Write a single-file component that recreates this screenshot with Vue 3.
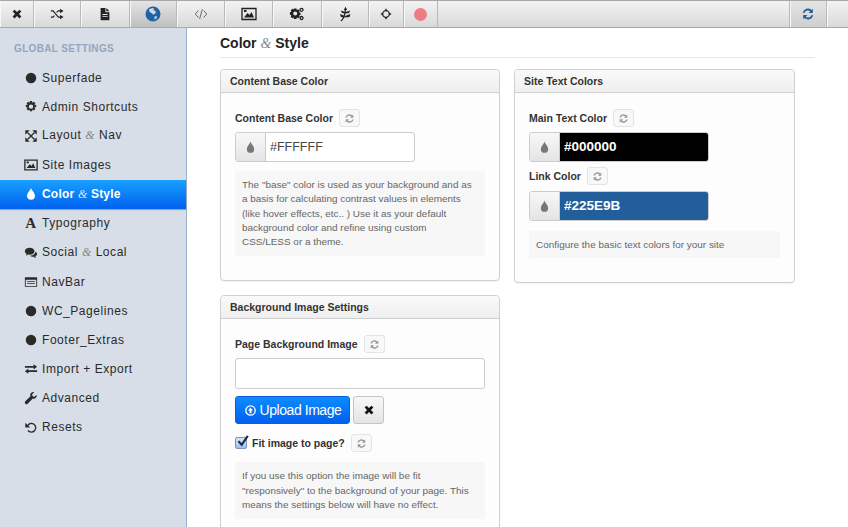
<script setup>
const icons = {
  times: { f: 'M3 5.2 5.2 3 8 5.8 10.800 3 13 5.2 10.200 8 13 10.800 10.800 13 8 10.200 5.200 13 3 10.800 5.800 8z' },
  random: { s: 'M1 4.500h2.500l6 7H12M1 11.500h2.500l1.500-1.700M7.500 6.200l2-1.700H12', f: 'M11.500 2l4 2.500-4 2.500zM11.500 9l4 2.500-4 2.500z' },
  file: { f: 'M3 1h5.500v5H13v9H3zM9.500 1 13 4.800H9.500zM5 8v1h6V8zM5 10.500v1h6v-1z' },
  globe: { f: 'M8 .5a7.500 7.500 0 1 0 0 15 7.500 7.500 0 0 0 0-15zM4 3.500c1.500-1 3-1.500 5-1.200L8.500 4 11 5.500 10 8l-2 .5L6.500 7 4.500 6zM9.500 10.500l2.500-.5-.5 2.500-2 1.300z' },
  code: { s: 'M5 4 1.500 8 5 12M11 4l3.500 4-3.500 4M9.500 2.500l-3 11' },
  image: { s: 'M1 2.500h14v11H1z', f: 'M3 11.500 6.500 7l2 2 2-3 2.500 5.500zM3 4h2.500v2H3z' },
  cogs: { s: 'M12.500 3.800m-1.500 0a1.500 1.500 0 1 0 3 0a1.500 1.500 0 1 0-3 0M12.500 12m-1.500 0a1.500 1.500 0 1 0 3 0a1.500 1.500 0 1 0-3 0', f: 'M5 2.500h2.400l.4 1.500 1.400-.7 1.500 1.600-.7 1.300 1.500.5v2.300l-1.500.4.7 1.400-1.500 1.500-1.400-.7-.4 1.500H5l-.4-1.500-1.400.7-1.500-1.500.7-1.400L.9 8.500V6.200l1.500-.5-.7-1.300 1.500-1.600 1.400.7zM6.200 5.400a2 2 0 1 0 0 4 2 2 0 0 0 0-4z' },
  leaf: { s: 'M4 15C6.500 13 8 10 8.500 3', f: 'M8.500 .8 6.800 4h3.400zM8.500 6 3.800 4.500 5 7l3.200.6zM8.500 6l4.700-1.500L12 7l-3.200.6zM8 10 2.800 8 4 11l3.500.4zM8 10l5.500-2-1 3-4.200.5z' },
  move: { s: 'M8 4.300a3.700 3.700 0 1 0 0 7.400 3.700 3.700 0 0 0 0-7.400z', f: 'M8 1.500 9.800 4.500H6.200zM8 14.500 6.200 11.500h3.600zM1.500 8 4.500 6.200v3.600zM14.500 8 11.500 9.800V6.200z' },
  refresh: { f: 'M13.500 2v4.800H8.700l1.800-1.800A3.800 3.800 0 0 0 4.200 6.500H2A6 6 0 0 1 12 3.500zM2.500 14V9.200h4.800l-1.800 1.800a3.800 3.800 0 0 0 6.300-1.500H14A6 6 0 0 1 4 12.500z' },
  dot: { f: 'M8 2a6 6 0 1 0 0 12A6 6 0 0 0 8 2z' },
  cog: { f: 'M6.800 1h2.400l.4 2 1.700-1.100 1.700 1.700-1.100 1.700 2 .4v2.400l-2 .4 1.100 1.700-1.700 1.700-1.700-1.100-.4 2H6.800l-.4-2-1.700 1.100L3 10.200l1.100-1.700-2-.4V5.700l2-.4L3 3.600l1.700-1.700 1.700 1.100zM8 5a2.500 2.500 0 1 0 0 5 2.500 2.500 0 0 0 0-5z' },
  expand: { s: 'M4 4l8 8M12 4l-8 8', f: 'M1.500 1.500h5l-5 5zM14.500 1.500v5l-5-5zM1.500 14.500v-5l5 5zM14.500 14.500h-5l5-5z' },
  drop: { f: 'M8 1c1 3 4.500 5.500 4.500 9a4.500 4.500 0 0 1-9 0C3.500 6.500 7 4 8 1z' },
  chat: { f: 'M6.500 2C3.400 2 1 3.700 1 6c0 1.300.8 2.400 2 3.100L2.300 11l2.500-1.300c.5.100 1.100.2 1.700.2 3.100 0 5.500-1.700 5.500-3.900S9.600 2 6.500 2zM13 6.500c0 2.700-2.800 4.500-6 4.500 1 1 2.200 1.500 4 1.300l2.500 1.700-.5-2.300c1.200-.6 2-1.600 2-2.700 0-1-.7-1.900-2-2.500z' },
  navbar: { f: 'M1 2.500h14v11H1zM2 5.500v7h12v-7zM3.500 7h9v1h-9zM3.500 9h9v1h-9z' },
  exchange: { f: 'M1 4.500h10V2.500l4 3-4 3v-2H1zM15 9.500H5v-2l-4 3 4 3v-2h10z' },
  wrench: { f: 'M14.500 4.200 12 6.500 9.800 6 9.300 3.800 11.700 1.400C9.500.7 7.500 2 7.200 4c-.1.700 0 1.300.2 1.900L1.500 11.800a1.900 1.900 0 0 0 2.700 2.700l5.900-5.900c2.600.8 5-1.500 4.400-4.400z' },
  undo: { s: 'M4 6.500A5 5 0 1 1 4.500 12', f: 'M1.500 3v5.500H7z' }
}

const tabs = [
  { icon: 'times', width: 34 },
  { icon: 'random', width: 47 },
  { icon: 'file', width: 49 },
  { icon: 'globe', width: 47, active: true },
  { icon: 'code', width: 48 },
  { icon: 'image', width: 48 },
  { icon: 'cogs', width: 49 },
  { icon: 'leaf', width: 47 },
  { icon: 'move', width: 35 },
  { icon: 'record', width: 34 }
]

const nav = [
  { label: 'Superfade', icon: 'dot' },
  { label: 'Admin Shortcuts', icon: 'cog' },
  { label: 'Layout', amp: 'Nav', icon: 'expand' },
  { label: 'Site Images', icon: 'image' },
  { label: 'Color', amp: 'Style', icon: 'drop', active: true },
  { label: 'Typography', letter: 'A' },
  { label: 'Social', amp: 'Local', icon: 'chat' },
  { label: 'NavBar', icon: 'navbar' },
  { label: 'WC_Pagelines', icon: 'dot' },
  { label: 'Footer_Extras', icon: 'dot' },
  { label: 'Import + Export', icon: 'exchange' },
  { label: 'Advanced', icon: 'wrench' },
  { label: 'Resets', icon: 'undo' }
]
</script>

<template>
  <div class="page">
    <header class="toolbar">
      <div
        v-for="tab in tabs"
        :key="tab.icon"
        class="tab"
        :class="{ active: tab.active }"
        :style="{ width: tab.width + 'px' }"
      >
        <span v-if="tab.icon === 'record'" class="record"></span>
        <svg v-else class="tab-icon" :class="tab.icon" viewBox="0 0 16 16">
          <path v-if="icons[tab.icon].s" class="stroke" :d="icons[tab.icon].s" />
          <path v-if="icons[tab.icon].f" class="fill" :d="icons[tab.icon].f" />
        </svg>
      </div>
      <div class="toolbar-fill"></div>
      <div class="tab save">
        <svg class="tab-icon refresh" viewBox="0 0 16 16"><path class="fill" :d="icons.refresh.f" /></svg>
      </div>
      <div class="tab last"></div>
    </header>

    <div class="body">
      <aside class="sidebar">
        <div class="side-title">GLOBAL SETTINGS</div>
        <a v-for="item in nav" :key="item.label" class="side-item" :class="{ active: item.active }">
          <span class="side-icon">
            <span v-if="item.letter" class="letter">{{ item.letter }}</span>
            <svg v-else viewBox="0 0 16 16">
              <path v-if="icons[item.icon].s" class="stroke" :d="icons[item.icon].s" />
              <path v-if="icons[item.icon].f" class="fill" :d="icons[item.icon].f" />
            </svg>
          </span>
          <span v-if="item.amp">{{ item.label }}&nbsp;<em class="amp">&amp;</em>&nbsp;{{ item.amp }}</span>
          <span v-else>{{ item.label }}</span>
        </a>
      </aside>

      <main class="main">
        <h2 class="title">Color <em class="amp">&amp;</em> Style</h2>
        <div class="columns">
          <div class="column">
            <section class="card">
              <h3 class="card-head">Content Base Color</h3>
              <div class="card-body">
                <div class="field-label">
                  <label>Content Base Color</label>
                  <button class="mini"><svg viewBox="0 0 16 16"><path class="fill" :d="icons.refresh.f" /></svg></button>
                </div>
                <div class="color-input">
                  <span class="addon"><svg viewBox="0 0 16 16"><path class="fill" :d="icons.drop.f" /></svg></span>
                  <span class="value">#FFFFFF</span>
                </div>
                <p class="help">The "base" color is used as your background and as a basis for calculating contrast values in elements (like hover effects, etc.. ) Use it as your default background color and refine using custom CSS/LESS or a theme.</p>
              </div>
            </section>

            <section class="card">
              <h3 class="card-head">Background Image Settings</h3>
              <div class="card-body">
                <div class="field-label">
                  <label>Page Background Image</label>
                  <button class="mini"><svg viewBox="0 0 16 16"><path class="fill" :d="icons.refresh.f" /></svg></button>
                </div>
                <div class="text-input"></div>
                <div class="upload-row">
                  <button class="upload">
                    <svg viewBox="0 0 16 16"><path class="upload-ring" d="M8 2.200a5.800 5.800 0 1 0 0 11.600A5.800 5.800 0 0 0 8 2.200z" /><path class="upload-arrow" d="M8 4.500 11.200 8H9.200v3.300H6.800V8H4.800z" /></svg>
                    Upload Image
                  </button>
                  <button class="clear"><svg viewBox="0 0 16 16"><path class="fill" :d="icons.times.f" /></svg></button>
                </div>
                <div class="check-row">
                  <span class="check">
                    <svg viewBox="0 0 16 16"><path d="M3 7.500 7 12 14.500 1" /></svg>
                  </span>
                  <label>Fit image to page?</label>
                  <button class="mini"><svg viewBox="0 0 16 16"><path class="fill" :d="icons.refresh.f" /></svg></button>
                </div>
                <p class="help">If you use this option the image will be fit "responsively" to the background of your page. This means the settings below will have no effect.</p>
              </div>
            </section>
          </div>

          <div class="column right">
            <section class="card">
              <h3 class="card-head">Site Text Colors</h3>
              <div class="card-body">
                <div class="field-label">
                  <label>Main Text Color</label>
                  <button class="mini"><svg viewBox="0 0 16 16"><path class="fill" :d="icons.refresh.f" /></svg></button>
                </div>
                <div class="color-input">
                  <span class="addon"><svg viewBox="0 0 16 16"><path class="fill" :d="icons.drop.f" /></svg></span>
                  <span class="value filled black">#000000</span>
                </div>
                <div class="field-label second">
                  <label>Link Color</label>
                  <button class="mini"><svg viewBox="0 0 16 16"><path class="fill" :d="icons.refresh.f" /></svg></button>
                </div>
                <div class="color-input">
                  <span class="addon"><svg viewBox="0 0 16 16"><path class="fill" :d="icons.drop.f" /></svg></span>
                  <span class="value filled blue">#225E9B</span>
                </div>
                <p class="help wide">Configure the basic text colors for your site</p>
              </div>
            </section>
          </div>
        </div>
      </main>
    </div>
  </div>
</template>

<style>
html, body { margin: 0; background: #fff; }
</style>

<style scoped>
.page { width: 848px; height: 527px; overflow: hidden; font-family: "Liberation Sans", Arial, sans-serif; display: flex; flex-direction: column; color: #222; }

.toolbar { display: flex; height: 28px; flex-shrink: 0; box-sizing: border-box; border-top: 1px solid #a8a8a8; border-bottom: 1px solid #aaa; background: linear-gradient(#f3f3f3, #d9d9d9); }
.tab { box-sizing: border-box; display: flex; align-items: center; justify-content: center; border-right: 1px solid #b9b9b9; box-shadow: inset 1px 0 0 #f8f8f8; }
.tab.active { background: linear-gradient(#e4e4e4, #bfbfbf); }
.tab-icon { width: 14px; height: 14px; color: #222; }
.tab-icon .stroke { fill: none; stroke: currentColor; stroke-width: 1.300; }
.tab-icon .fill { fill: currentColor; fill-rule: evenodd; }
.tab-icon.globe { color: #1d63a8; width: 16px; height: 16px; }
.tab-icon.code { color: #555; }
.tab-icon.code .stroke { stroke-width: 1; }
.tab-icon.image, .tab-icon.cogs, .tab-icon.leaf { width: 16px; height: 16px; }
.tab-icon.refresh { color: #1d5fa0; }
.record { width: 13px; height: 13px; border-radius: 50%; background: #ee7c84; }
.toolbar-fill { flex: 1; }
.tab.save { width: 38px; border-left: 1px solid #b9b9b9; background: linear-gradient(#e4e4e4, #cfcfcf); }
.tab.last { width: 21px; border: 0; }

.body { flex: 1; display: flex; min-height: 0; }

.sidebar { width: 187px; flex-shrink: 0; box-sizing: border-box; background: #d7dee7; border-right: 1px solid #9db0c9; padding-top: 14px; }
.side-title { font-size: 10px; font-weight: bold; color: #94a6bd; padding-left: 14px; height: 21px; line-height: 13px; letter-spacing: .35px; }
.side-item { display: flex; align-items: center; height: 29.170px; font-size: 12px; letter-spacing: .55px; color: #2a2a2a; }
.side-icon { width: 42px; flex-shrink: 0; display: flex; justify-content: flex-end; padding-right: 4px; box-sizing: border-box; }
.side-icon svg { width: 14px; height: 14px; }
.side-icon .fill { fill: currentColor; fill-rule: evenodd; }
.side-icon .stroke { fill: none; stroke: currentColor; stroke-width: 1.500; }
.letter { font-family: "Liberation Serif", serif; font-size: 15px; line-height: 14px; width: 14px; text-align: center; font-weight: bold; }
.side-item.active { background: linear-gradient(#18a0ff, #0060ee); color: #fff; font-weight: bold; letter-spacing: .2px; box-shadow: 0 1px 1px rgba(0, 0, 0, .25); }
.amp { font-family: "Liberation Serif", serif; font-style: italic; font-weight: normal; color: #888; }
.side-item.active .amp { color: #d5e8ff; }

.main { flex: 1; min-width: 0; padding: 0 33px; }
.title { margin: 0 0 11px; height: 30px; box-sizing: border-box; width: 595px; font-size: 14px; line-height: 30px; border-bottom: 1px solid #e8e8e8; color: #222; }
.columns { display: flex; gap: 14px; }
.column { width: 280px; display: flex; flex-direction: column; gap: 14px; }
.column.right { width: 281px; }

.card { border: 1px solid #d0d0d0; border-radius: 4px; background: #fdfdfd; box-shadow: 0 1px 1px rgba(0, 0, 0, .05); }
.card-head { margin: 0; height: 23px; box-sizing: border-box; padding-left: 9px; font-size: 10.500px; line-height: 22px; font-weight: bold; background: linear-gradient(#fafafa, #efefef); border-bottom: 1px solid #d0d0d0; border-radius: 4px 4px 0 0; color: #333; }
.card-body { padding: 16px 14px 24px; }

.field-label { display: flex; align-items: center; gap: 6px; height: 18px; margin-bottom: 5px; }
.field-label.second { margin-top: 5px; margin-bottom: 6px; }
label { font-size: 10.500px; font-weight: bold; color: #333; margin-top: -1px; }
.mini { width: 21px; height: 18px; padding: 0; display: flex; align-items: center; justify-content: center; border: 1px solid #e4e4e4; border-radius: 3px; background: #f8f8f8; }
.mini svg { width: 11px; height: 11px; }
.mini .fill { fill: #999; fill-rule: evenodd; }

.color-input { display: flex; width: 180px; height: 30px; box-sizing: border-box; border: 1px solid #ccc; border-radius: 3px; background: #fff; overflow: hidden; }
.addon { width: 29px; flex-shrink: 0; display: flex; align-items: center; justify-content: center; background: linear-gradient(#f8f8f8, #e4e4e4); border-right: 1px solid #ccc; }
.addon svg { width: 13px; height: 13px; }
.addon .fill { fill: #777; }
.value { flex: 1; padding-left: 4px; font-size: 12.500px; line-height: 28px; color: #444; }
.value.filled { font-size: 13.500px; font-weight: bold; color: #fff; }
.value.black { background: #000; }
.value.blue { background: #225e9b; }

.help { margin: 9px 0 0; padding: 7px 11px 7px 7px; background: #f7f7f7; font-size: 9.950px; line-height: 14.300px; color: #666; }
.help.wide { margin-top: 10px; padding-bottom: 6px; }

.text-input { height: 31px; box-sizing: border-box; border: 1px solid #ccc; border-radius: 3px; background: #fff; }
.upload-row { display: flex; gap: 3px; margin-top: 7px; }
.upload { width: 115px; height: 28px; padding: 0; display: flex; align-items: center; justify-content: center; gap: 3px; border: 1px solid #0a5fd8; border-radius: 3px; background: linear-gradient(#0b8dff, #0060ee); color: #fff; font-family: inherit; font-size: 14px; letter-spacing: -.45px; }
.upload svg { width: 13px; height: 13px; }
.upload-ring { fill: none; stroke: #fff; stroke-width: 1.600; }
.upload-arrow { fill: #fff; }
.clear { width: 31px; height: 28px; padding: 0; display: flex; align-items: center; justify-content: center; border: 1px solid #c4c4c4; border-radius: 3px; background: linear-gradient(#f8f8f8, #e4e4e4); }
.clear svg { width: 14px; height: 14px; }
.clear .fill { fill: #111; }
.check-row { display: flex; align-items: center; gap: 5px; margin-top: 10px; height: 18px; }
.check-row .mini { margin-left: 1px; }
.check { position: relative; width: 12px; height: 12px; flex-shrink: 0; box-sizing: border-box; border: 1px solid #7f94b5; border-radius: 2px; background: linear-gradient(#d8e6fa, #9dbdea); }
.check svg { position: absolute; left: 0; top: -3px; width: 13px; height: 13px; }
.check path { fill: none; stroke: #1b2a4a; stroke-width: 2.600; }
.check-row + .help { margin-top: 10px; }
</style>
